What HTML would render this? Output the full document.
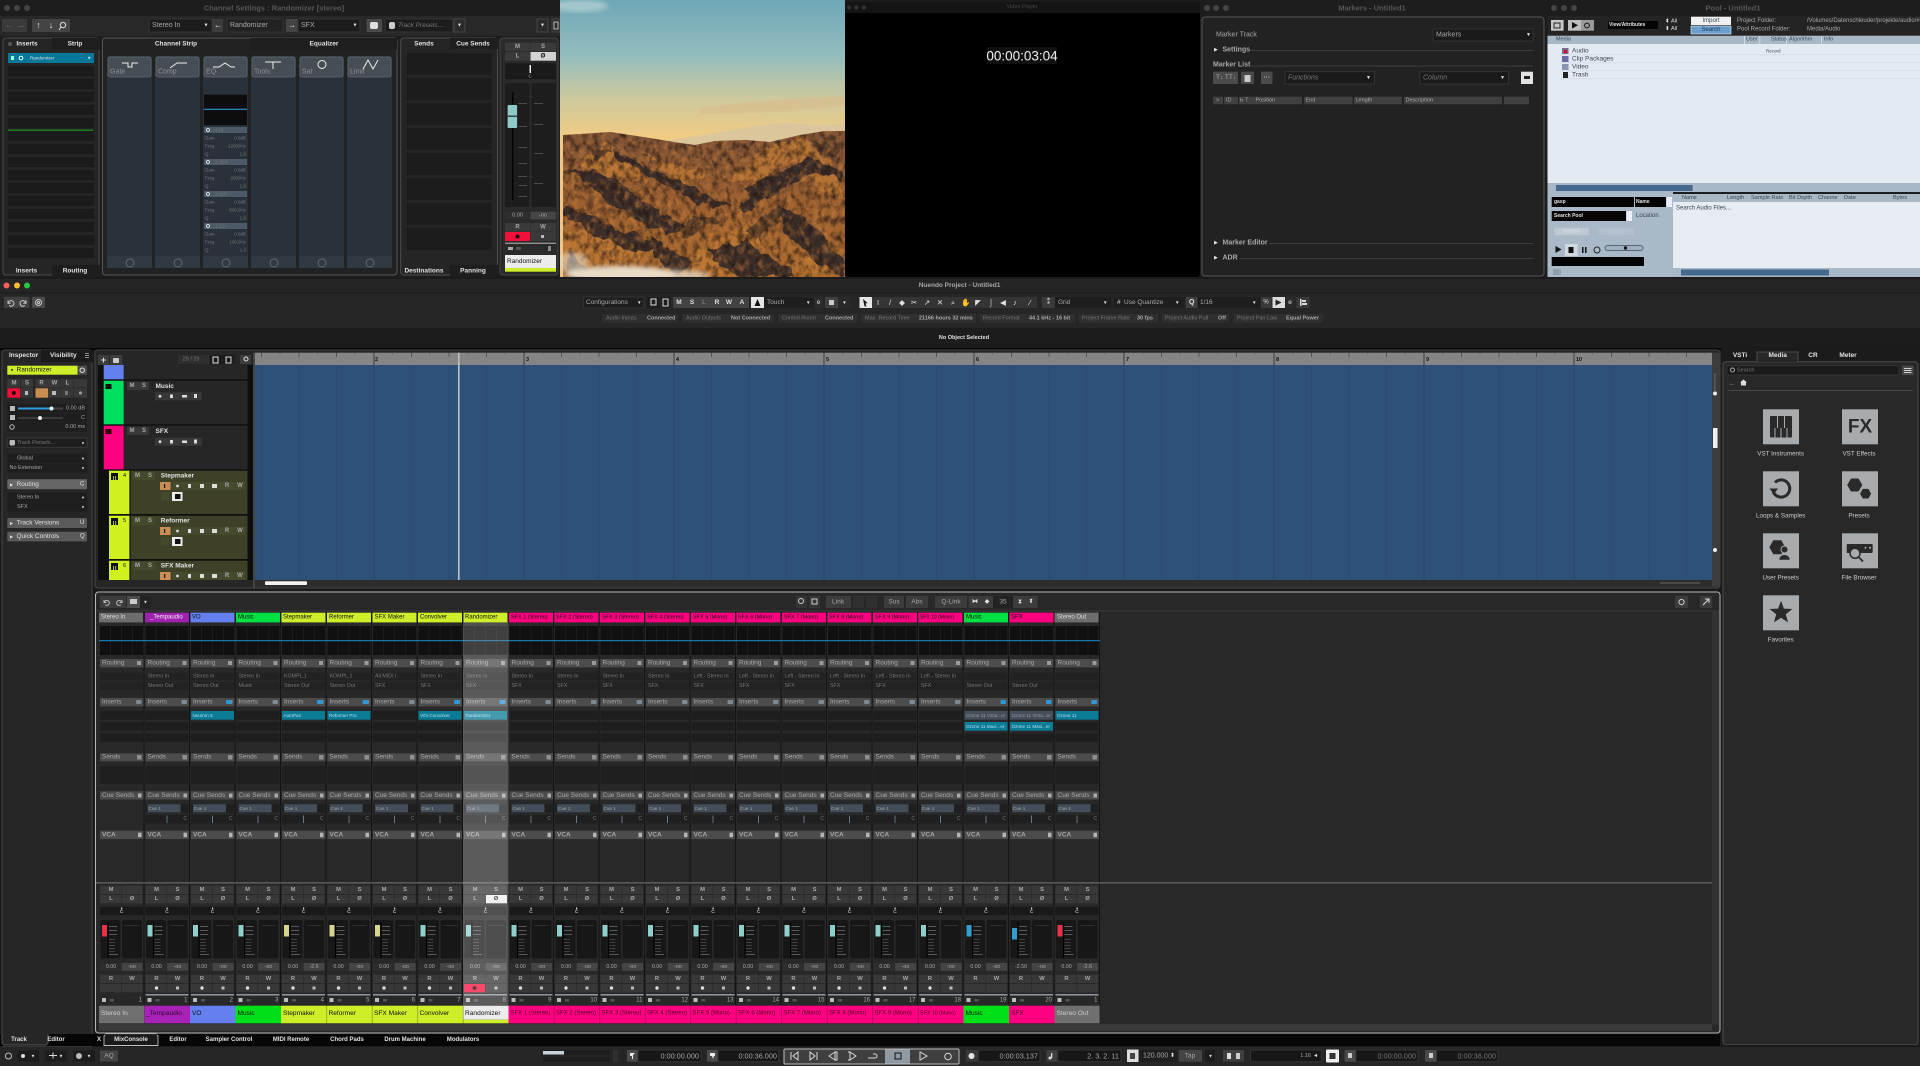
<!DOCTYPE html>
<html lang="en"><head><meta charset="utf-8"><title>Nuendo Project - Untitled1</title>
<style>
html,body{margin:0;padding:0;width:1920px;height:1066px;overflow:hidden;background:#1b1b1b}
svg{display:block;font-family:"Liberation Sans",sans-serif;font-size:6.5px;filter:blur(.3px)}
text{dominant-baseline:central;fill:#a8a8a8;white-space:pre}
.m text,text.m{text-anchor:middle}
.e text,text.e{text-anchor:end}
.w text,text.w{fill:#e2e2e2}
.d text,text.d{fill:#111}
.g text,text.g{fill:#777}
.l text,text.l{fill:#3a4652}
.b text,text.b{font-weight:bold}
text.t{fill:#565656;font-weight:bold;text-anchor:middle;font-size:7.5px}
</style></head><body>
<svg width="1920" height="1066" viewBox="0 0 1920 1066" xmlns="http://www.w3.org/2000/svg">
<defs>
<linearGradient id="sky" x1="0" y1="0" x2="0" y2="1"><stop offset="0" stop-color="#6ea7b8"/><stop offset=".2" stop-color="#93bdbd"/><stop offset=".36" stop-color="#cfc99d"/><stop offset=".5" stop-color="#f1cc83"/><stop offset=".62" stop-color="#f0c585"/></linearGradient>
<linearGradient id="mt" x1="0" y1="0" x2="0" y2="1"><stop offset="0" stop-color="#7d5236"/><stop offset=".5" stop-color="#9c6030"/><stop offset="1" stop-color="#ad6c2e"/></linearGradient>
<filter id="nz" x="0" y="0" width="1" height="1" color-interpolation-filters="sRGB"><feTurbulence type="fractalNoise" baseFrequency=".16 .12" numOctaves="4" seed="4"/><feColorMatrix values="0 0 0 0 .12 0 0 0 0 .08 0 0 0 0 .07 1.7 0 0 0 -.72"/><feComposite in2="SourceGraphic" operator="in"/></filter>
<filter id="nl" x="0" y="0" width="1" height="1" color-interpolation-filters="sRGB"><feTurbulence type="fractalNoise" baseFrequency=".14 .11" numOctaves="4" seed="11"/><feColorMatrix values="0 0 0 0 .8 0 0 0 0 .5 0 0 0 0 .24 1.5 0 0 0 -.68"/><feComposite in2="SourceGraphic" operator="in"/></filter>
<filter id="dp" x="-5%" y="-5%" width="110%" height="110%" color-interpolation-filters="sRGB"><feTurbulence type="fractalNoise" baseFrequency=".07" numOctaves="3" seed="7" result="n"/><feDisplacementMap in="SourceGraphic" in2="n" scale="12" xChannelSelector="R" yChannelSelector="G"/></filter>
<filter id="bl"><feGaussianBlur stdDeviation="2.5"/></filter>
<filter id="bs"><feGaussianBlur stdDeviation=".8"/></filter>
<clipPath id="wp"><rect x="560" y="0" width="285" height="277"/></clipPath>
<clipPath id="mc"><path d="M563 135l17-1 30-2 20 3 20 3 30 5 15 2 20-4 30-1 25 2 30-7 25-4 20 0v146H563z"/></clipPath>
<pattern id="rul" patternUnits="userSpaceOnUse" x="373.5" y="352" width="150" height="13"><rect width="150" height="13" fill="#858585"/><rect x="0" width="1" height="13" fill="#3d3d3d"/><rect x="37.5" width="1" height="5" fill="#555"/><rect x="75" width="1" height="5" fill="#555"/><rect x="112.5" width="1" height="5" fill="#555"/><rect x="18.7" width="1" height="3" fill="#6a6a6a"/><rect x="56" width="1" height="3" fill="#6a6a6a"/><rect x="93.7" width="1" height="3" fill="#6a6a6a"/><rect x="131" width="1" height="3" fill="#6a6a6a"/></pattern>
<pattern id="evt" patternUnits="userSpaceOnUse" x="373.5" y="365" width="150" height="215"><rect width="150" height="215" fill="#2e5079"/><rect x="0" width="1" height="215" fill="#284668"/><rect x="37.5" width="1" height="215" fill="#2b4b72"/><rect x="75" width="1" height="215" fill="#2b4b72"/><rect x="112.5" width="1" height="215" fill="#2b4b72"/></pattern>
<g id="s">
<rect x="44.5" y="612" width="1" height="393" fill="#141414"/>
<rect x="1" y="626" width="43" height="29" fill="#101010"/>
<rect x="11" y="626" width="1" height="29" fill="#1c1c1c"/><rect x="22" y="626" width="1" height="29" fill="#1c1c1c"/><rect x="33" y="626" width="1" height="29" fill="#1c1c1c"/>
<rect x="1" y="659" width="43.5" height="8.4" fill="#4c4c4c"/><rect x="38" y="661" width="4" height="4" fill="#9a9a9a"/>
<rect x="1" y="672.7" width="43" height="7.6" fill="#222"/><rect x="1" y="682.3" width="43" height="7.7" fill="#222"/>
<rect x="1" y="698" width="43.5" height="8.4" fill="#4c4c4c"/><rect x="37" y="700" width="5.5" height="4" rx="1" fill="#7c8a96"/>
<rect x="1" y="711" width="43" height="8.7" fill="#1e1e1e"/><rect x="1" y="722" width="43" height="8.7" fill="#1e1e1e"/><rect x="1" y="733.3" width="43" height="8.7" fill="#1e1e1e"/>
<rect x="1" y="753.3" width="43.5" height="8" fill="#4c4c4c"/><rect x="38" y="755" width="4.5" height="4.5" fill="#8f8f8f"/>
<rect x="1" y="766" width="43" height="18" fill="#1f1f1f"/>
<rect x="1" y="791.3" width="43.5" height="8.2" fill="#4c4c4c"/><rect x="39" y="793.5" width="3.5" height="4" fill="#ababab"/>
<rect x="1" y="804.3" width="43" height="8" fill="#1f1f1f"/><rect x="3" y="804.3" width="33" height="8" fill="#434e5a"/>
<rect x="1" y="815" width="43" height="8.3" fill="#1f1f1f"/><rect x="22" y="815.5" width="1" height="7.5" fill="#6a7682"/>
<rect x="1" y="830.7" width="43.5" height="8.4" fill="#4c4c4c"/><rect x="39" y="832.7" width="3.5" height="4.5" fill="#b5b5b5"/>
<rect x="1" y="885.7" width="21" height="8.3" fill="#383838"/><rect x="22.6" y="885.7" width="21" height="8.3" fill="#383838"/>
<rect x="1" y="895" width="21" height="8.3" fill="#383838"/><rect x="22.6" y="895" width="21" height="8.3" fill="#383838"/>
<rect x="1" y="906.7" width="43" height="8.6" rx="2" fill="#191919"/><rect x="22" y="907.5" width="1.2" height="2" fill="#ddd"/>
<rect x="1.5" y="920" width="20" height="38.5" rx="2" fill="#171717"/><rect x="23" y="920" width="20" height="38.5" rx="2" fill="#171717"/>
<rect x="8.5" y="922" width="1" height="36" fill="#000"/>
<rect x="10" y="926" width="8" height=".7" fill="#777"/><rect x="10" y="930" width="8" height=".7" fill="#777"/><rect x="10" y="934" width="8" height=".7" fill="#777"/><rect x="10" y="939" width="6" height=".7" fill="#555"/><rect x="10" y="942" width="6" height=".7" fill="#555"/><rect x="10" y="945" width="6" height=".7" fill="#555"/><rect x="10" y="948" width="6" height=".7" fill="#555"/><rect x="10" y="951" width="6" height=".7" fill="#555"/><rect x="10" y="954" width="9" height=".7" fill="#777"/>
<rect x="26" y="925" width="14" height=".7" fill="#3a3a3a"/>
<rect x="1" y="963" width="21" height="7.7" fill="#2d2d2d"/><rect x="22.6" y="963" width="21" height="7.7" fill="#454545"/>
<rect x="1" y="974.7" width="21" height="8.3" fill="#383838"/><rect x="22.6" y="974.7" width="21" height="8.3" fill="#383838"/>
<rect x="1" y="984" width="21" height="8.3" fill="#383838"/><rect x="22.6" y="984" width="21" height="8.3" fill="#383838"/>
<rect x="1" y="994" width="43" height="1.6" fill="#8a939b"/>
<rect x="3" y="998" width="4" height="4" fill="#bbb"/><rect x="11" y="999" width="4" height="2.5" fill="#555"/>
</g>
</defs>

<!-- Channel settings window -->
<rect x="0" y="0" width="563" height="277" rx="4" fill="#1e1e1e"/>
<rect x="0" y="0" width="563" height="16" fill="#1d1d1d"/>
<circle cx="7" cy="8" r="3" fill="#444"/><circle cx="17" cy="8" r="3" fill="#444"/><circle cx="27" cy="8" r="3" fill="#444"/>
<text class="t" x="274" y="8">Channel Settings : Randomizer [stereo]</text>
<rect x="0" y="16" width="563" height="20" fill="#282828"/>
<rect x="2" y="19" width="25" height="13" fill="#3a3a3a"/><rect x="32" y="19" width="38" height="13" fill="#444"/>
<g class="w m" font-size="9"><text x="38.5" y="25">↑</text><text x="51" y="25">↓</text></g><text class="g m" x="9" y="25" font-size="8">←</text><text class="g m" x="21" y="25" font-size="8">→</text>
<circle cx="63" cy="25" r="2.7" fill="none" stroke="#ddd"/><path d="M61 27l-2 3" stroke="#ddd"/>
<rect x="149" y="19" width="63" height="13" fill="#1c1c1c" stroke="#333"/><text x="152" y="25.5" font-size="7">Stereo In</text><text class="w m" x="206" y="25.5" font-size="5">▼</text>
<rect x="212" y="19" width="11" height="13" fill="#3c3c3c"/><text class="w m" x="218" y="25" font-size="8">←</text>
<rect x="227" y="19" width="56" height="13" fill="#222" stroke="#333"/><text x="230" y="25.5" font-size="7">Randomizer</text>
<rect x="286" y="19" width="12" height="13" fill="#444"/><text class="w m" x="292" y="25" font-size="8">→</text>
<rect x="298" y="19" width="62" height="13" fill="#1c1c1c" stroke="#333"/><text x="301" y="25.5" font-size="7">SFX</text><text class="w m" x="355" y="25.5" font-size="5">▼</text>
<rect x="366.5" y="19" width="15.5" height="13" fill="#4a4a4a"/><rect x="370" y="22" width="8" height="7" rx="2" fill="#ddd"/>
<rect x="385" y="19" width="68" height="13" fill="#1c1c1c" stroke="#333"/><rect x="389" y="22" width="6" height="7" rx="2" fill="#ccc"/><text class="g" x="398" y="25.5" font-size="6.5" font-style="italic">Track Presets...</text>
<rect x="454" y="19" width="11" height="13" fill="#2b2b2b" stroke="#444"/><text class="w m" x="459.5" y="25.5" font-size="5">▼</text>
<rect x="537" y="19" width="11" height="13" fill="#2b2b2b" stroke="#444"/><text class="w m" x="542.5" y="25.5" font-size="5">▼</text><rect x="552" y="19" width="8" height="13" fill="#2b2b2b" stroke="#444"/><rect x="554" y="22" width="4" height="7" fill="none" stroke="#bbb"/>
<rect x="3" y="38" width="96" height="237" rx="3" fill="#252525" stroke="#4a4a4a"/>
<rect x="52" y="38" width="48" height="12" fill="#1e1e1e"/><rect x="52" y="265" width="48" height="11" fill="#1e1e1e"/>
<circle cx="10" cy="44" r="2" fill="#555"/><g class="w b m" font-size="6.5"><text x="27" y="44">Inserts</text><text x="75" y="44">Strip</text><text x="26.5" y="271">Inserts</text><text x="75" y="271">Routing</text></g>
<rect x="8" y="53" width="86" height="10" fill="#08789a"/><text class="w" x="30" y="58" font-size="4.5">Randomizer</text><rect x="11" y="56" width="3" height="4" fill="#9fd"/><circle cx="21" cy="58" r="1.8" fill="none" stroke="#dff"/><text class="w" x="87" y="58" font-size="4.5">▼</text>
<g fill="#1b1b1b"><rect x="8" y="66" width="86" height="10"/><rect x="8" y="79" width="86" height="10"/><rect x="8" y="92" width="86" height="10"/><rect x="8" y="105" width="86" height="10"/><rect x="8" y="118" width="86" height="10"/><rect x="8" y="131" width="86" height="10"/><rect x="8" y="144" width="86" height="10"/><rect x="8" y="157" width="86" height="10"/><rect x="8" y="170" width="86" height="10"/><rect x="8" y="183" width="86" height="10"/><rect x="8" y="196" width="86" height="10"/><rect x="8" y="209" width="86" height="10"/><rect x="8" y="222" width="86" height="10"/><rect x="8" y="235" width="86" height="10"/><rect x="8" y="248" width="86" height="10"/></g>
<rect x="8" y="129.5" width="85" height="1.5" fill="#1a7d1e"/>
<rect x="102.5" y="38" width="294.5" height="237" rx="3" fill="#222" stroke="#555"/>
<rect x="251" y="38" width="146" height="12" fill="#1e1e1e"/>
<g class="w b m" font-size="6.5"><text x="176" y="44">Channel Strip</text><text x="324" y="44">Equalizer</text></g>
<g fill="#29323a"><rect x="107" y="56" width="45" height="212" rx="2"/><rect x="155" y="56" width="45" height="212" rx="2"/><rect x="203" y="56" width="45" height="212" rx="2"/><rect x="251" y="56" width="45" height="212" rx="2"/><rect x="299" y="56" width="45" height="212" rx="2"/><rect x="347" y="56" width="45" height="212" rx="2"/></g>
<g fill="#464e55" stroke="#646c72" stroke-width=".7"><rect x="108" y="57" width="43" height="20" rx="2"/><rect x="156" y="57" width="43" height="20" rx="2"/><rect x="204" y="57" width="43" height="20" rx="2"/><rect x="252" y="57" width="43" height="20" rx="2"/><rect x="300" y="57" width="43" height="20" rx="2"/><rect x="348" y="57" width="43" height="20" rx="2"/></g>
<g fill="none" stroke="#eee" stroke-width="1"><path d="M122 67h6v5h0M122 62.5h6v5h4v-5h6" stroke="none"/><path d="M122 67h6v5" stroke="none"/><path d="M122 63h6v4h4v-4h6"/><path d="M170 68l7-5h10"/><path d="M213 67h6l6-4 6 4h4"/><path d="M265 62h16M273 62v7"/><circle cx="322" cy="64.5" r="4"/><path d="M363 69l5-9 5 9 5-9"/></g>
<g font-size="7"><text x="110" y="72" style="fill:#8a9095">Gate</text><text x="158" y="72" style="fill:#8a9095">Comp</text><text x="206" y="72" style="fill:#8a9095">EQ</text><text x="254" y="72" style="fill:#8a9095">Tools</text><text x="302" y="72" style="fill:#8a9095">Sat</text><text x="350" y="72" style="fill:#8a9095">Limit</text></g>
<g fill="#2f3941"><rect x="107" y="256" width="45" height="12"/><rect x="155" y="256" width="45" height="12"/><rect x="203" y="256" width="45" height="12"/><rect x="251" y="256" width="45" height="12"/><rect x="299" y="256" width="45" height="12"/><rect x="347" y="256" width="45" height="12"/></g>
<g fill="none" stroke="#5f6b74"><circle cx="130" cy="263" r="4"/><circle cx="178" cy="263" r="4"/><circle cx="226" cy="263" r="4"/><circle cx="274" cy="263" r="4"/><circle cx="322" cy="263" r="4"/><circle cx="370" cy="263" r="4"/></g>
<rect x="204" y="94.7" width="43" height="30.5" fill="#0d0d0d"/><rect x="204" y="108.7" width="43" height="1.2" fill="#2a8fc0"/>
<g fill="#4b5a66"><rect x="204" y="127" width="43" height="6"/><rect x="204" y="159" width="43" height="6"/><rect x="204" y="191" width="43" height="6"/><rect x="204" y="223" width="43" height="6"/></g>
<g fill="none" stroke="#ddd"><circle cx="208" cy="130" r="1.6"/><circle cx="208" cy="162" r="1.6"/><circle cx="208" cy="194" r="1.6"/><circle cx="208" cy="226" r="1.6"/></g>
<g font-size="4.5" class="g"><text x="215" y="130">4 HI</text><text x="215" y="162">3 HMF</text><text x="215" y="194">2 LMF</text><text x="215" y="226">1 LO</text>
<text x="205" y="138">Gain</text><text x="205" y="146">Freq</text><text x="205" y="154">Q</text><text x="205" y="170">Gain</text><text x="205" y="178">Freq</text><text x="205" y="186">Q</text><text x="205" y="202">Gain</text><text x="205" y="210">Freq</text><text x="205" y="218">Q</text><text x="205" y="234">Gain</text><text x="205" y="242">Freq</text><text x="205" y="250">Q</text></g>
<g font-size="4.5" class="g e"><text x="246" y="138">0.0dB</text><text x="246" y="146">12000Hz</text><text x="246" y="154">1.0</text><text x="246" y="170">0.0dB</text><text x="246" y="178">2000Hz</text><text x="246" y="186">1.0</text><text x="246" y="202">0.0dB</text><text x="246" y="210">800.0Hz</text><text x="246" y="218">1.0</text><text x="246" y="234">0.0dB</text><text x="246" y="242">100.0Hz</text><text x="246" y="250">1.0</text></g>
<rect x="400.7" y="38" width="96.8" height="237" rx="3" fill="#252525" stroke="#4f4f4f"/><rect x="450" y="38" width="48" height="11" fill="#1e1e1e"/><rect x="450" y="265" width="48" height="11" fill="#1e1e1e"/>
<g fill="#1c1c1c"><rect x="406.5" y="53" width="85" height="22"/><rect x="406.5" y="78" width="85" height="22"/><rect x="406.5" y="103" width="85" height="22"/><rect x="406.5" y="128" width="85" height="22"/><rect x="406.5" y="153" width="85" height="22"/><rect x="406.5" y="178" width="85" height="22"/><rect x="406.5" y="203" width="85" height="22"/><rect x="406.5" y="228" width="85" height="22"/></g>
<g class="w b m" font-size="6.5"><text x="424" y="44">Sends</text><text x="473" y="44">Cue Sends</text><text x="424" y="271">Destinations</text><text x="473" y="271">Panning</text></g>
<rect x="500" y="38" width="58" height="237" rx="3" fill="#2a2a2a" stroke="#444"/>
<rect x="505" y="42.7" width="25" height="8.5" fill="#3a3a3a"/><rect x="530.5" y="42.7" width="25.5" height="8.5" fill="#3a3a3a"/><rect x="505" y="52" width="25" height="8.7" fill="#3a3a3a"/><rect x="530.5" y="52" width="25.5" height="8.7" fill="#d2d2d2"/>
<g class="m b" font-size="6"><text x="517.5" y="47">M</text><text x="543" y="47">S</text><text x="517.5" y="56.5">L</text><text class="d" x="543" y="56.5">Ø</text></g>
<rect x="505" y="63.3" width="51" height="16" rx="2" fill="#1a1a1a"/><rect x="529.5" y="65" width="1.5" height="8" fill="#eee"/><text class="m" x="530" y="76" font-size="4.5">C</text>
<rect x="505" y="83" width="24.5" height="124" rx="2" fill="#1d1d1d"/><rect x="531.5" y="83" width="24.5" height="124" rx="2" fill="#1d1d1d"/><rect x="512" y="92" width="1.5" height="108" fill="#050505"/>
<g fill="#555"><rect x="518" y="103" width="9" height=".8"/><rect x="518" y="126" width="9" height=".8"/><rect x="518" y="147" width="9" height=".8"/><rect x="518" y="163" width="9" height=".8"/><rect x="518" y="176" width="9" height=".8"/><rect x="518" y="185" width="9" height=".8"/><rect x="518" y="196" width="9" height=".8"/><rect x="534" y="103" width="9" height=".8"/><rect x="534" y="124" width="9" height=".8"/><rect x="534" y="153" width="9" height=".8"/><rect x="534" y="183" width="9" height=".8"/></g>
<rect x="507.6" y="105" width="9.5" height="23" rx="1" fill="#8fcac8"/><rect x="507.6" y="115.5" width="9.5" height="1.5" fill="#33494a"/>
<rect x="505" y="211.7" width="24.5" height="7.7" fill="#2e2e2e"/><rect x="530.5" y="211.7" width="25.5" height="7.7" fill="#454545"/><text class="m" x="517.5" y="215.5" font-size="5.5">0.00</text><text class="m" x="543" y="215.5" font-size="5.5">-oo</text>
<rect x="505" y="223" width="25" height="8.7" fill="#3a3a3a"/><rect x="530.5" y="223" width="25.5" height="8.7" fill="#3a3a3a"/><rect x="505" y="232" width="25" height="9" fill="#f0103a"/><rect x="530.5" y="232" width="25.5" height="9" fill="#3a3a3a"/><circle cx="517.5" cy="236.5" r="2" fill="#180004"/><rect x="541" y="235" width="3" height="3" fill="#bbb"/>
<g class="m b" font-size="6"><text x="517.5" y="227.5">R</text><text x="543" y="227.5">W</text></g>
<rect x="505" y="242.7" width="51" height="1" fill="#bbb"/><rect x="508" y="247" width="5" height="3" fill="#aaa"/><rect x="516" y="247" width="5" height="3" fill="#555"/><rect x="548" y="246" width="3" height="5" fill="#888"/>
<rect x="505" y="255" width="51" height="13" fill="#ececec"/><rect x="505" y="268" width="51" height="3.7" fill="#cdee28"/><text class="d" x="507" y="261.5" font-size="6.5">Randomizer</text>

<!-- Wallpaper -->
<g clip-path="url(#wp)">
<rect x="560" y="0" width="290" height="277" fill="url(#sky)"/>
<ellipse cx="580" cy="6" rx="28" ry="6" fill="#cfe0da" opacity=".55" filter="url(#bl)"/>
<path d="M700 108l40-5 35-3 70-4v10l-70 6-75 2z" fill="#d9b98a" opacity=".55" filter="url(#bs)"/>
<path d="M660 142l60-10 35-6 30-3 30 2 35-1v30H660z" fill="#d8c4a0" opacity=".85"/>
<path d="M563 135l17-1 30-2 20 3 20 3 30 5 15 2 20-4 30-1 25 2 30-7 25-4 20 0v146H563z" fill="url(#mt)"/>
<g clip-path="url(#mc)"><g filter="url(#dp)">
<g fill="#bd7934" opacity=".8"><path d="M575 165l30-22 25 25 20 15-40-6z"/><path d="M640 150l30 15 40 8-25 15z"/><path d="M725 180l40-32 40-12 20 30-30-6-35 20z"/><path d="M563 232l40 0 40 20-30 18-50-10z"/><path d="M700 250l50-28 20 5-35 50h-50z"/><path d="M790 150l40 10 15 40-25-10z"/><path d="M800 235l20 10 15 30h-25z"/></g>
<g fill="#2f2729" opacity=".88"><path d="M610 147l34 20 34 13 38 20 16 7-20 1-38-18-34-16-30-22z"/><path d="M568 170l34 3 34 24 50 30-21 6-50-26-30-24z"/><path d="M564 207l21 6 34 17 46 17-21 6-46-16-34-20z"/><path d="M779 207l25 10 40 43v17l-32-20-29-27z"/><path d="M737 207l33-30 42-20 32 16v9l-27-12-38 20-34 23z"/><path d="M707 253l38-13 34 23 17 14h-55z"/><path d="M640 160l22 16-14 2z"/><path d="M570 250l25 27h-30z"/><path d="M650 235l40 25-12 17-24-20z"/><path d="M745 190l22-14 6 6-20 18z"/></g>
<g fill="#473526" opacity=".75"><path d="M745 230l20-15 20-5-25 30z"/><path d="M690 215l30 5-40 20z"/><path d="M590 145l20 8-16 10z"/><path d="M810 140l30 5v14l-22-5z"/></g>
</g></g>
<path d="M563 135l17-1 30-2 20 3 20 3 30 5 15 2 20-4 30-1 25 2 30-7 25-4 20 0v146H563z" filter="url(#nl)"/>
<path d="M563 135l17-1 30-2 20 3 20 3 30 5 15 2 20-4 30-1 25 2 30-7 25-4 20 0v146H563z" filter="url(#nz)"/>
<g filter="url(#bl)" fill="#e8dcc8"><ellipse cx="620" cy="274" rx="55" ry="8"/><ellipse cx="670" cy="275" rx="40" ry="5" opacity=".8"/><ellipse cx="572" cy="262" rx="16" ry="10" opacity=".6"/></g>
</g>

<!-- Video player -->
<rect x="845" y="2" width="355" height="275" rx="3" fill="#000"/><rect x="845" y="2" width="355" height="11" fill="#141414"/>
<circle cx="849" cy="7.5" r="2" fill="#333"/><circle cx="856.5" cy="7.5" r="2" fill="#333"/><circle cx="864" cy="7.5" r="2" fill="#333"/>
<text class="m" x="1022" y="7" font-size="5.5" style="fill:#444">Video Player</text>
<rect x="987" y="47" width="70" height="17" fill="#111"/><text class="m w" x="1022" y="56" font-size="13.5" style="fill:#f2f2f2">00:00:03:04</text>

<!-- Markers -->
<rect x="1200" y="0" width="347" height="277" fill="#1d1d1d"/><circle cx="1207" cy="8" r="3" fill="#444"/><circle cx="1216" cy="8" r="3" fill="#444"/><circle cx="1226" cy="8" r="3" fill="#444"/>
<text class="t" x="1372" y="8">Markers - Untitled1</text>
<rect x="1202" y="17" width="342" height="259" rx="3" fill="#222" stroke="#555"/>
<text x="1216" y="35" font-size="7">Marker Track</text>
<rect x="1433" y="29" width="100" height="12" fill="#1a1a1a" stroke="#333"/><text x="1436" y="35" font-size="7">Markers</text><text class="w" x="1526" y="35" font-size="5">▼</text>
<g class="w" font-size="5"><text x="1214" y="50">▶</text><text x="1214" y="243">▶</text><text x="1214" y="258">▶</text></g>
<g font-size="7" class="b"><text x="1222.5" y="50">Settings</text><text x="1213" y="65">Marker List</text><text x="1222.5" y="243">Marker Editor</text><text x="1222.5" y="258">ADR</text></g>
<g fill="#3d3d3d"><rect x="1250" y="50" width="283" height="1"/><rect x="1250" y="65.5" width="283" height="1"/><rect x="1269" y="243" width="264" height="1"/><rect x="1240" y="258" width="293" height="1"/></g>
<rect x="1213" y="71.7" width="25" height="12.3" fill="#4a4a4a"/><rect x="1241" y="71.7" width="13" height="12.3" fill="#4a4a4a"/><rect x="1244.5" y="75" width="6" height="7" fill="#ccc"/><rect x="1261" y="71.7" width="11.5" height="12.3" fill="#4a4a4a"/><text class="w m" x="1266.7" y="77.5">⋯</text><text x="1216" y="77.5">T↓ TT↓</text>
<rect x="1285" y="71.7" width="89.5" height="12.3" fill="#1a1a1a" stroke="#333"/><text class="g" x="1288" y="78" font-size="7" font-style="italic">Functions</text><text class="w" x="1366" y="78" font-size="5">▼</text>
<rect x="1420" y="71.7" width="88.5" height="12.3" fill="#1a1a1a" stroke="#333"/><text class="g" x="1423" y="78" font-size="7" font-style="italic">Column</text><text class="w" x="1500" y="78" font-size="5">▼</text>
<rect x="1521" y="71.7" width="12" height="12.3" fill="#e2e2e2"/><rect x="1524" y="76" width="6" height="3" fill="#222"/>
<g fill="#404040"><rect x="1213" y="96.7" width="10" height="7.6"/><rect x="1224" y="96.7" width="14" height="7.6"/><rect x="1239" y="96.7" width="15" height="7.6"/><rect x="1254" y="96.7" width="48" height="7.6"/><rect x="1304" y="96.7" width="48.5" height="7.6"/><rect x="1354" y="96.7" width="48" height="7.6"/><rect x="1404" y="96.7" width="98" height="7.6"/><rect x="1504" y="96.7" width="25" height="7.6"/></g>
<g font-size="5.5"><text x="1216" y="100.7">&gt;</text><text x="1226" y="100.7">ID</text><text x="1240" y="100.7">Ь T</text><text x="1255.5" y="100.7">Position</text><text x="1305.5" y="100.7">End</text><text x="1355.5" y="100.7">Length</text><text x="1405.5" y="100.7">Description</text></g>

<!-- Pool -->
<rect x="1547" y="0" width="373" height="277" fill="#1d1d1d"/><circle cx="1554" cy="8" r="3" fill="#444"/><circle cx="1564" cy="8" r="3" fill="#444"/><circle cx="1574" cy="8" r="3" fill="#444"/>
<text class="t" x="1733" y="8">Pool - Untitled1</text>
<rect x="1547.5" y="16" width="372.5" height="20" fill="#242424"/>
<rect x="1551" y="20" width="12.6" height="10.7" fill="#c8c8c8"/><rect x="1554" y="23" width="6" height="5" fill="none" stroke="#222"/>
<rect x="1568" y="20" width="13" height="10.7" fill="#bfbfbf"/><path d="M1572 22l6 3.3-6 3.3z" fill="#111"/><rect x="1581" y="20" width="13" height="10.7" fill="#9a9a9a"/><circle cx="1587" cy="25.5" r="2.4" fill="none" stroke="#111"/>
<rect x="1608" y="21" width="50" height="8" fill="#050505"/><text class="w b" x="1609" y="25" font-size="5">View/Attributes</text>
<g class="w" font-size="5.5"><text x="1665" y="21.5">⬍</text><text x="1671" y="21.5">All</text><text x="1665" y="29">⬍</text><text x="1671" y="29">All</text></g>
<rect x="1691" y="16.7" width="40" height="8.3" fill="#f0f0f0"/><text class="m l" x="1711" y="21" font-size="6">Import</text>
<rect x="1691" y="26" width="40" height="8" fill="#6a9fd0" stroke="#d8e4ee" stroke-width=".7"/><text class="m l" x="1711" y="30" font-size="6" style="fill:#1b3550">Search</text>
<g font-size="6"><text x="1737" y="21">Project Folder:</text><text x="1737" y="29.5">Pool Record Folder:</text><text x="1807" y="21">/Volumes/Datenschleuder/projekte/audio/#r</text><text x="1807" y="29.5">Media/Audio</text></g>
<rect x="1547.5" y="35.7" width="372.5" height="8.3" fill="#a9b8c6"/>
<g fill="#dfe6ed"><rect x="1744" y="36" width=".7" height="8"/><rect x="1759.5" y="36" width=".7" height="8"/><rect x="1786" y="36" width=".7" height="8"/><rect x="1821" y="36" width=".7" height="8"/></g>
<g class="l" font-size="5.5"><text x="1556" y="39.7">Media</text><text x="1746" y="39.7">User</text><text x="1771" y="39.7">Status</text><text x="1789" y="39.7">Algorithm</text><text x="1824" y="39.7">Info</text></g>
<rect x="1547.5" y="44" width="372.5" height="139" fill="#e4eaf1"/>
<g fill="#ced6de"><rect x="1560" y="54.5" width="360" height=".7"/><rect x="1560" y="62.5" width="360" height=".7"/><rect x="1560" y="70.5" width="360" height=".7"/><rect x="1560" y="78.5" width="360" height=".7"/></g>
<rect x="1562" y="48" width="6.5" height="6" fill="#7a6a90"/><rect x="1564" y="50" width="3" height="3" fill="#d01020"/><rect x="1562" y="56" width="6.5" height="6" fill="#6a6aa8"/><rect x="1562" y="64" width="6.5" height="6" fill="#8a94b4"/><rect x="1563" y="72" width="5" height="6" fill="#222"/>
<g class="l" font-size="6.5"><text x="1572" y="51">Audio</text><text x="1572" y="59">Clip Packages</text><text x="1572" y="67">Video</text><text x="1572" y="75">Trash</text><text x="1766" y="51" font-size="4.5">Record</text></g>
<rect x="1547.5" y="183" width="372.5" height="9" fill="#a8b8c8"/><rect x="1556" y="185" width="136.6" height="6" fill="#45698e"/>
<rect x="1547.5" y="192" width="125.5" height="85" fill="#a9b9c8"/>
<rect x="1551.7" y="197" width="82.3" height="10" fill="#050505"/><text class="w b" x="1554" y="202" font-size="5">gasp</text><rect x="1635" y="197" width="31" height="10" fill="#050505"/><text class="w b" x="1636" y="202" font-size="5">Name</text><rect x="1666.5" y="197" width="5.5" height="10" fill="#eef"/>
<rect x="1551.7" y="211" width="74.3" height="10" fill="#050505"/><text class="w b" x="1554" y="216" font-size="5">Search Pool</text><rect x="1626.5" y="211" width="5.5" height="10" fill="#eef"/><text class="l" x="1636" y="216" font-size="6">Location</text>
<rect x="1554" y="227.7" width="35" height="7.5" rx="2" fill="#bdc8d3"/><rect x="1599" y="227.7" width="35" height="7.5" rx="2" fill="#b2c0cd"/><text class="m" x="1571.5" y="231.5" font-size="5.5" style="fill:#dfe6ee">Search</text><text class="m" x="1616" y="231.5" font-size="5.5" style="fill:#bfcad6">Select</text>
<path d="M1555.5 246l6 3.5-6 3.5z" fill="#111"/><rect x="1565" y="244" width="12.5" height="12" fill="#cfd7df"/><rect x="1568.5" y="247" width="5" height="6" fill="#111"/><rect x="1582" y="247" width="1.5" height="6" fill="#111"/><rect x="1585" y="247" width="1.5" height="6" fill="#111"/><circle cx="1597" cy="250" r="3" fill="none" stroke="#222"/>
<rect x="1605" y="245.5" width="38" height="5" rx="2.5" fill="#9fb0c0" stroke="#3f4f5f" stroke-width=".7"/><circle cx="1625.5" cy="248" r="1.7" fill="#111"/>
<rect x="1551.7" y="257" width="92.3" height="9" fill="#050505"/><rect x="1553" y="269" width="8" height="6" fill="#8f9fad"/>
<rect x="1673" y="194" width="247" height="8" fill="#a9b8c6"/>
<g class="l" font-size="5.6"><text x="1682" y="198">Name</text><text x="1727" y="198">Length</text><text x="1751" y="198">Sample Rate</text><text x="1789" y="198">Bit Depth</text><text x="1818" y="198">Channe</text><text x="1844" y="198">Date</text><text x="1893" y="198">Bytes</text></g>
<rect x="1673" y="202" width="247" height="66" fill="#e6ecf2"/><text class="l" x="1676" y="208.7" font-size="6">Search Audio Files...</text>
<rect x="1673" y="268" width="247" height="9" fill="#a8b8c8"/><rect x="1681" y="269.5" width="148" height="6" fill="#45698e"/>

<!-- Main window -->
<rect x="0" y="279" width="1920" height="70" fill="#262626"/>
<rect x="0" y="279" width="1920" height="13.5" fill="#252525"/><rect x="0" y="292.5" width="1920" height="1" fill="#1c1c1c"/>
<circle cx="6.5" cy="285.5" r="3" fill="#f4605a"/><circle cx="17" cy="285.5" r="3" fill="#f9bd2e"/><circle cx="27" cy="285.5" r="3" fill="#28c840"/>
<text class="m b" x="959.5" y="285.7" font-size="6.5">Nuendo Project - Untitled1</text>
<rect x="4" y="296.7" width="25.4" height="11.3" rx="1" fill="#404040"/><rect x="32" y="296.7" width="13" height="11.3" rx="1" fill="#4a4a4a"/><g fill="none" stroke="#ccc"><path d="M8 300.5v2.8h2.8M8.4 303a2.8 2.8 0 1 1 .8 2.4"/><path d="M26 300.5v2.8h-2.8M25.6 303a2.8 2.8 0 1 0-.8 2.4"/><circle cx="38.5" cy="302.5" r="3"/><circle cx="38.5" cy="302.5" r="1"/></g>
<rect x="0" y="328" width="1920" height="21" fill="#1c1c1c"/><rect x="0" y="348" width="1920" height="2" fill="#080808"/>
<text class="m w b" x="964" y="338" font-size="5.5">No Object Selected</text>
<rect x="583.5" y="297" width="60.5" height="11" fill="#1e1e1e" stroke="#333"/><text x="586" y="302.5" font-size="6.5">Configurations</text><text class="w" x="637" y="302.5" font-size="4.5">▼</text>
<rect x="647" y="297" width="13" height="11" fill="#1e1e1e"/><rect x="651" y="299" width="5" height="6" fill="none" stroke="#ddd"/><rect x="661" y="297" width="9" height="11" fill="#1e1e1e"/><rect x="663" y="299" width="5" height="7" fill="none" stroke="#ddd"/>
<rect x="673" y="297" width="76" height="11" fill="#424242"/>
<g class="w m b" font-size="6.5"><text x="679" y="302.7">M</text><text x="692" y="302.7">S</text><text class="g" x="704" y="302.7">L</text><text x="717" y="302.7">R</text><text x="729" y="302.7">W</text><text x="742" y="302.7">A</text></g>
<rect x="751" y="297" width="13" height="11" fill="#e6e6e6"/><path d="M757.5 299l3 7h-6z" fill="#111"/>
<rect x="764" y="297" width="50" height="11" fill="#1e1e1e"/><text x="767" y="302.5" font-size="6.5">Touch</text><text class="w" x="806" y="302.5" font-size="4.5">▼</text>
<rect x="814" y="297" width="9" height="11" fill="#2b2b2b"/><text class="w m" x="818.5" y="302.5">e</text>
<rect x="825" y="297" width="13" height="11" fill="#404040"/><rect x="829" y="300" width="5" height="5" fill="#ccc"/><rect x="838" y="297" width="13" height="11" fill="#2a2a2a"/><text class="w m" x="844.5" y="302.5" font-size="4.5">▼</text>
<rect x="859.5" y="297" width="177.5" height="11" fill="#343434"/><rect x="859.5" y="297" width="12.5" height="11" fill="#e6e6e6"/><path d="M863 299l4.5 4-2 .5 1 3-2-.3z" fill="#111"/>
<g class="w m" font-size="7.5"><text x="878" y="302.5">I</text><text x="890" y="302.5">/</text><text x="902" y="302.5">◆</text><text x="914" y="302.5">✂</text><text x="927" y="302.5">↗</text><text x="940" y="302.5">✕</text><text x="953" y="302.5">⌕</text><text x="966" y="302.5">✋</text><text x="978" y="302.5">◤</text><text x="991" y="302.5">⌡</text><text x="1003" y="302.5">◀</text><text x="1015" y="302.5">♪</text><text x="1030" y="302.5">⁄</text></g>
<rect x="1042" y="297" width="13" height="11" fill="#3a3a3a"/><text class="w m" x="1048.5" y="302.5" font-size="7">⁑</text>
<rect x="1055" y="297" width="56" height="11" fill="#1e1e1e"/><text x="1058" y="302.5" font-size="6.5">Grid</text><text class="w" x="1103" y="302.5" font-size="4.5">▼</text>
<rect x="1114" y="297" width="69.5" height="11" fill="#1e1e1e"/><text x="1117" y="302.5" font-size="6.5" class="w">#</text><text x="1124" y="302.5" font-size="6.5">Use Quantize</text><text class="w" x="1175" y="302.5" font-size="4.5">▼</text>
<rect x="1186" y="297" width="11.5" height="11" fill="#404040"/><text class="w m b" x="1191.7" y="302.5" font-size="7">Q</text>
<rect x="1197.5" y="297" width="62.5" height="11" fill="#1e1e1e"/><text x="1200" y="302.5" font-size="6.5">1/16</text><text class="w" x="1252" y="302.5" font-size="4.5">▼</text>
<rect x="1261" y="297" width="10.5" height="11" fill="#3a3a3a"/><text class="w m" x="1266" y="302.5" font-size="6">%</text><rect x="1272.5" y="297" width="12.5" height="11" fill="#dcdcdc"/><rect x="1286" y="297" width="8" height="11" fill="#2b2b2b"/><text class="w m" x="1290" y="302.5">e</text><rect x="1296.5" y="297" width="13" height="11" fill="#3a3a3a"/><rect x="1300" y="299" width="1.5" height="7" fill="#ddd"/><rect x="1302" y="300" width="4" height="2" fill="#ddd"/><rect x="1302" y="303" width="5" height="2" fill="#ddd"/><path d="M1275.5 299.5l6 3-6 3z" fill="#222"/>
<g fill="#2f2f2f"><rect x="602" y="314" width="76" height="8.7"/><rect x="682.5" y="314" width="91.5" height="8.7"/><rect x="778" y="314" width="79.5" height="8.7"/><rect x="861" y="314" width="115" height="8.7"/><rect x="979.4" y="314" width="95.6" height="8.7"/><rect x="1079" y="314" width="79" height="8.7"/><rect x="1162" y="314" width="67" height="8.7"/><rect x="1233.5" y="314" width="89.5" height="8.7"/></g>
<g font-size="5.5" class="g"><text x="606" y="318.5">Audio Inputs</text><text x="686" y="318.5">Audio Outputs</text><text x="782" y="318.5">Control Room</text><text x="865" y="318.5">Max. Record Time</text><text x="983" y="318.5">Record Format</text><text x="1082" y="318.5">Project Frame Rate</text><text x="1165" y="318.5">Project Audio Pull</text><text x="1237" y="318.5">Project Pan Law</text></g>
<g font-size="5.5" class="b"><text x="647" y="318.5">Connected</text><text x="731" y="318.5">Not Connected</text><text x="825" y="318.5">Connected</text><text x="919" y="318.5">21166 hours 32 mins</text><text x="1029" y="318.5">44.1 kHz - 16 bit</text><text x="1137" y="318.5">30 fps</text><text x="1218" y="318.5">Off</text><text x="1286" y="318.5">Equal Power</text></g>

<!-- Inspector -->
<rect x="2" y="350" width="90" height="697" rx="3" fill="#262626" stroke="#444"/>
<rect x="41" y="350" width="52" height="12" fill="#1b1b1b"/>
<g class="w b" font-size="6.5"><text x="9" y="355.5">Inspector</text><text x="50" y="355.5">Visibility</text></g><rect x="85" y="353" width="4" height=".8" fill="#aaa"/><rect x="85" y="355" width="4" height=".8" fill="#aaa"/><rect x="85" y="357" width="4" height=".8" fill="#aaa"/>
<rect x="7.3" y="365.7" width="70.2" height="9" fill="#cdee28"/><rect x="77.5" y="365.7" width="9.5" height="9" fill="#4d4d4d"/><circle cx="82.2" cy="370.2" r="2.2" fill="none" stroke="#ddd"/><text class="d" x="16.5" y="370.2" font-size="6.5">Randomizer</text><text class="d" x="10" y="370.2" font-size="4">▼</text>
<g fill="#383838"><rect x="7.3" y="379" width="13" height="8.7"/><rect x="21" y="379" width="12" height="8.7"/><rect x="35.5" y="379" width="12.5" height="8.7"/><rect x="48" y="379" width="12.5" height="8.7"/><rect x="61" y="379" width="12.5" height="8.7"/><rect x="74" y="379" width="13" height="8.7"/><rect x="21" y="388.3" width="12" height="9.4"/><rect x="48" y="388.3" width="12.5" height="9.4"/><rect x="61" y="388.3" width="12.5" height="9.4"/><rect x="74" y="388.3" width="13" height="9.4"/></g>
<rect x="7.3" y="388.3" width="13" height="9.4" fill="#f0103a"/><circle cx="13.8" cy="393" r="2" fill="#200"/><rect x="35.5" y="388.3" width="12.5" height="9.4" fill="#c98d52"/><rect x="25" y="391" width="3" height="4" fill="#bbb"/><rect x="52" y="391" width="4" height="4" fill="#bbb"/><rect x="65" y="391" width="3" height="4" fill="#777"/><circle cx="80.5" cy="393" r="1.6" fill="#999"/>
<g class="m b" font-size="6"><text x="14" y="383.5">M</text><text x="27" y="383.5">S</text><text x="41.5" y="383.5">R</text><text x="54.5" y="383.5">W</text><text x="67.5" y="383.5">L</text></g>
<rect x="7.3" y="404" width="79.7" height="8.7" fill="#1e1e1e"/><rect x="7.3" y="413.4" width="79.7" height="8.7" fill="#1e1e1e"/><rect x="7.3" y="422.7" width="79.7" height="9" fill="#1e1e1e"/>
<rect x="18" y="407.5" width="33.5" height="2" fill="#2b9ce0"/><rect x="51.5" y="407.5" width="11.5" height="2" fill="#444"/><circle cx="51.5" cy="408.5" r="2" fill="#eee"/><rect x="18" y="417" width="45" height="2" fill="#3a3a3a"/><circle cx="40" cy="418" r="2" fill="#eee"/>
<rect x="10" y="406" width="5" height="5" fill="#bbb"/><rect x="10" y="415" width="5" height="5" fill="#bbb"/><circle cx="12" cy="427" r="2.2" fill="none" stroke="#bbb"/>
<g class="e" font-size="5.5"><text x="85" y="408.5">0.00 dB</text><text x="85" y="418">C</text><text x="85" y="427">0.00 ms</text></g>
<rect x="7.3" y="438" width="79.7" height="9.3" fill="#1e1e1e" stroke="#383838"/><rect x="9.5" y="440" width="5.5" height="5.5" rx="1.5" fill="#bbb"/><text class="g" x="17" y="442.8" font-size="5.5" font-style="italic">Track Presets...</text><text class="w e" x="85" y="442.8" font-size="4">▼</text>
<rect x="7.3" y="453.7" width="79.7" height="9.3" fill="#1e1e1e"/><rect x="7.3" y="463.5" width="79.7" height="9" fill="#1e1e1e"/><text x="17" y="458.5" font-size="5.5">Global</text><text x="9.5" y="468" font-size="5.5">No Extension</text><text class="w e" x="85" y="458.5" font-size="4">▼</text><text class="w e" x="85" y="468" font-size="4">▼</text>
<g fill="#666"><rect x="7.3" y="479.3" width="79.7" height="10" rx="1"/></g><rect x="7.3" y="518" width="79.7" height="10" rx="1" fill="#5a5a5a"/><rect x="7.3" y="531.7" width="79.7" height="9.7" rx="1" fill="#5a5a5a"/>
<g class="w" font-size="6.5"><text x="16.5" y="484.5">Routing</text><text x="16.5" y="523">Track Versions</text><text x="16.5" y="536.5">Quick Controls</text><text x="10" y="484.3" font-size="4">▶</text><text x="10" y="523" font-size="4">▶</text><text x="10" y="536.5" font-size="4">▶</text><text x="80" y="484.3" font-size="6">C</text><text x="80" y="523" font-size="6">U</text><text x="80" y="536.5" font-size="6">Q</text></g>
<rect x="7.3" y="492.7" width="79.7" height="9.3" fill="#1e1e1e"/><rect x="7.3" y="502.3" width="79.7" height="9.3" fill="#1e1e1e"/><text x="17" y="497.5" font-size="5.5">Stereo In</text><text x="17" y="507" font-size="5.5">SFX</text><text class="w e" x="85" y="497.5" font-size="4">▼</text><text class="w e" x="85" y="507" font-size="4">▼</text>

<!-- Project -->
<rect x="95" y="350" width="1625" height="238" rx="3" fill="#262626" stroke="#444"/>
<rect x="98" y="355" width="11" height="10" fill="#3c3c3c"/><text class="w m b" x="103.5" y="360" font-size="9">+</text><rect x="110" y="355" width="12.4" height="10" fill="#3c3c3c"/><rect x="113" y="358" width="6" height="5" rx="1" fill="#ccc"/>
<rect x="178" y="355" width="31" height="9" fill="#2e2e2e"/><text class="m g" x="191" y="359.5" font-size="5.5">29 / 29</text>
<rect x="210" y="355" width="25" height="9" fill="#1c1c1c"/><rect x="213" y="357" width="5" height="6" fill="none" stroke="#ddd"/><rect x="226" y="357" width="5" height="6" fill="none" stroke="#ddd"/>
<rect x="240" y="355" width="11" height="9" fill="#3c3c3c"/><circle cx="246" cy="359" r="2" fill="none" stroke="#ddd"/>
<rect x="98" y="365" width="155" height="215" fill="#0f0f0f"/>
<rect x="103.7" y="365" width="20" height="14.3" fill="#6480ee"/><rect x="124" y="365" width="123.5" height="14.3" fill="#262626"/>
<rect x="103.7" y="380.7" width="20" height="43.6" fill="#00e060"/><rect x="124" y="380.7" width="123.5" height="43.6" fill="#262626"/><rect x="105.5" y="384" width="6" height="5" fill="#111"/>
<rect x="103.7" y="425.7" width="20" height="43.6" fill="#ff0080"/><rect x="124" y="425.7" width="123.5" height="43.6" fill="#262626"/><rect x="105.5" y="429" width="6" height="5" fill="#300"/>
<g fill="#d0f020"><rect x="109" y="470.7" width="20.4" height="43.3"/><rect x="109" y="515.7" width="20.4" height="43.3"/><rect x="109" y="560.7" width="20.4" height="19.3"/></g>
<g fill="#3e4128"><rect x="130.6" y="470.7" width="116.9" height="43.3"/><rect x="130.6" y="515.7" width="116.9" height="43.3"/><rect x="130.6" y="560.7" width="116.9" height="19.3"/></g>
<g fill="#0e0e0e"><rect x="111" y="473" width="7" height="7"/><rect x="111" y="518" width="7" height="7"/><rect x="111" y="563" width="7" height="7"/></g>
<g fill="#d0f020"><rect x="113" y="476" width=".8" height="4"/><rect x="115.3" y="476" width=".8" height="4"/><rect x="113" y="521" width=".8" height="4"/><rect x="115.3" y="521" width=".8" height="4"/><rect x="113" y="566" width=".8" height="4"/><rect x="115.3" y="566" width=".8" height="4"/></g>
<g class="d" font-size="5.5"><text x="123" y="476">4</text><text x="123" y="521">5</text><text x="123" y="566">6</text></g>
<g fill="#383838"><rect x="127" y="382" width="22" height="8"/><rect x="127" y="427" width="22" height="8"/><rect x="155" y="392.3" width="47" height="8"/><rect x="155" y="437.7" width="47" height="8"/></g>
<g fill="#444a2c"><rect x="133" y="472" width="22" height="8"/><rect x="133" y="517" width="22" height="8"/><rect x="133" y="562" width="22" height="8"/><rect x="172" y="482" width="73" height="8"/><rect x="172" y="527" width="73" height="8"/><rect x="172" y="572" width="73" height="8"/><rect x="161" y="492.5" width="8" height="8"/><rect x="161" y="537.5" width="8" height="8"/></g>
<g fill="#c98d52"><rect x="160" y="482" width="10.6" height="8"/><rect x="160" y="527" width="10.6" height="8"/><rect x="160" y="572" width="10.6" height="8"/></g>
<g fill="#ececec"><rect x="172" y="492" width="10.5" height="9"/><rect x="172" y="537" width="10.5" height="9"/></g>
<g fill="#ddd"><circle cx="160" cy="396.3" r="1.4"/><circle cx="160" cy="441.7" r="1.4"/><circle cx="177.5" cy="486" r="1.4"/><circle cx="177.5" cy="531" r="1.4"/><circle cx="177.5" cy="576" r="1.4"/>
<rect x="170" y="394.5" width="3" height="3.5"/><rect x="182" y="395" width="5" height="2.5"/><rect x="194" y="394" width="3" height="4"/><rect x="170" y="440" width="3" height="3.5"/><rect x="182" y="440.5" width="5" height="2.5"/><rect x="194" y="439.5" width="3" height="4"/>
<rect x="188" y="484" width="3" height="4"/><rect x="200" y="484" width="4" height="4"/><rect x="212" y="484" width="5" height="4"/><rect x="188" y="529" width="3" height="4"/><rect x="200" y="529" width="4" height="4"/><rect x="212" y="529" width="5" height="4"/><rect x="188" y="574" width="3" height="4"/><rect x="200" y="574" width="4" height="4"/><rect x="212" y="574" width="5" height="4"/></g>
<g fill="#111"><rect x="164" y="484" width="1.2" height="4"/><rect x="164" y="529" width="1.2" height="4"/><rect x="164" y="574" width="1.2" height="4"/><rect x="175" y="494" width="5.5" height="5"/><rect x="175" y="539" width="5.5" height="5"/></g>
<g class="m b" font-size="6"><text x="132" y="386">M</text><text x="144" y="386">S</text><text x="132" y="431">M</text><text x="144" y="431">S</text><text x="137.5" y="476">M</text><text x="150" y="476">S</text><text x="137.5" y="521">M</text><text x="150" y="521">S</text><text x="137.5" y="566">M</text><text x="150" y="566">S</text>
<text x="227" y="486">R</text><text x="240" y="486">W</text><text x="227" y="531">R</text><text x="240" y="531">W</text><text x="227" y="576">R</text><text x="240" y="576">W</text></g>
<g class="w b" font-size="6.5"><text x="155.5" y="386.3">Music</text><text x="155.5" y="431.3">SFX</text><text x="160.8" y="476">Stepmaker</text><text x="160.8" y="521">Reformer</text><text x="160.8" y="566">SFX Maker</text></g>
<rect x="253" y="352.7" width="2" height="235" fill="#444"/>
<rect x="255" y="352.7" width="1457" height="12.3" fill="url(#rul)"/>
<g class="d b" font-size="5.5"><text x="375" y="360">2</text><text x="526" y="360">3</text><text x="676" y="360">4</text><text x="826" y="360">5</text><text x="976" y="360">6</text><text x="1126" y="360">7</text><text x="1276" y="360">8</text><text x="1426" y="360">9</text><text x="1576" y="360">10</text></g>
<rect x="255" y="365" width="1457" height="215" fill="url(#evt)"/>
<rect x="458" y="352.7" width="1.6" height="227.3" fill="#b8c0c8"/>
<rect x="255" y="580" width="1465" height="7" fill="#2d2d2d"/><rect x="265" y="581.3" width="42" height="3.7" rx="1" fill="#f2f2f2"/>
<rect x="1712" y="352.7" width="8" height="234" fill="#3c3c3c"/>
<rect x="1713" y="428" width="4.5" height="20" fill="#eee"/><rect x="1714" y="373" width="1.5" height="18" fill="#5a5a5a"/><circle cx="1715" cy="393.5" r="2" fill="#eee"/><circle cx="1715" cy="550" r="2" fill="#eee"/>
<rect x="1660" y="582" width="40" height="2" fill="#4a4a4a"/>

<!-- Right zone -->
<rect x="1722" y="347" width="198" height="15" fill="#1b1b1b"/><rect x="1723" y="361.7" width="195" height="683" rx="3" fill="#282828" stroke="#4c4c4c"/>
<path d="M1757 362v-10h41v10" fill="#282828" stroke="#4c4c4c"/>
<g class="w b m" font-size="6.5"><text x="1740" y="355.5">VSTi</text><text x="1777.7" y="355.5">Media</text><text x="1813" y="355.5">CR</text><text x="1848" y="355.5">Meter</text></g>
<rect x="1727" y="365.7" width="172" height="9.3" rx="1" fill="#1a1a1a" stroke="#333"/><circle cx="1732.5" cy="370" r="2" fill="none" stroke="#aaa"/><text class="g" x="1737" y="370.3" font-size="5.5">Search</text>
<rect x="1902" y="365.7" width="11.5" height="9.3" fill="#4a4a4a"/><rect x="1904" y="368" width="7.5" height=".9" fill="#ddd"/><rect x="1904" y="370" width="7.5" height=".9" fill="#ddd"/><rect x="1904" y="372" width="7.5" height=".9" fill="#ddd"/>
<text class="g m" x="1732" y="383" font-size="8">←</text><path d="M1743.5 379.5l3.5 3h-1v3h-5v-3h-1z" fill="#ddd"/>
<rect x="1728" y="390" width="185" height=".7" fill="#555"/>
<g fill="#a7abad"><rect x="1763" y="409.3" width="36" height="35"/><rect x="1842" y="409.3" width="36" height="35"/><rect x="1763" y="471.3" width="36" height="35"/><rect x="1842" y="471.3" width="36" height="35"/><rect x="1763" y="533.3" width="36" height="35"/><rect x="1842" y="533.3" width="36" height="35"/><rect x="1763" y="595.3" width="36" height="35"/></g>
<rect x="1770" y="416" width="22" height="21.5" rx="1" fill="#2a2a2a"/><g fill="#a7abad"><rect x="1774.5" y="428" width="1" height="9.5"/><rect x="1780.5" y="428" width="1" height="9.5"/><rect x="1786.5" y="428" width="1" height="9.5"/><rect x="1777" y="416" width="1" height="12"/><rect x="1784" y="416" width="1" height="12"/></g>
<text class="m b" x="1860" y="427" font-size="19" style="fill:#2a2a2a">FX</text>
<path d="M1775 482.5A8.6 8.6 0 1 1 1773.3 492" fill="none" stroke="#2a2a2a" stroke-width="3"/><path d="M1769.5 488.5h8.5l-4.2 6z" fill="#2a2a2a"/>
<path d="M1847.2 485l3.8-6.5h7.5l3.8 6.5-3.8 6.5H1851z" fill="#2a2a2a"/><path d="M1860 493.7l2.8-4.8h5.6l2.8 4.8-2.8 4.8h-5.6z" fill="#2a2a2a"/>
<path d="M1769.3 547.3l4-7h8l4 7-4 7h-8z" fill="#2a2a2a"/><circle cx="1784.5" cy="549.5" r="3.5" fill="#2a2a2a" stroke="#a7abad"/><path d="M1779 560c0-7 11-7 11 0z" fill="#2a2a2a" stroke="#a7abad" stroke-width=".6"/>
<rect x="1846.7" y="544" width="26" height="9" rx="1" fill="#2a2a2a"/><circle cx="1865.5" cy="547.7" r="1" fill="#a7abad"/><circle cx="1870" cy="547.7" r="1" fill="#a7abad"/><circle cx="1855" cy="553.3" r="5" fill="#a7abad" stroke="#2a2a2a" stroke-width="1.5"/><path d="M1858.5 557l4.5 4.5" stroke="#2a2a2a" stroke-width="1.8"/>
<path d="M1781 600.7l2.9 7.9 8.5.4-6.6 5.2 2.2 8.2-7-4.7-7 4.7 2.2-8.2-6.6-5.2 8.5-.4z" fill="#2a2a2a"/>
<g class="m" font-size="6.3"><text x="1780.7" y="454" style="fill:#ccc">VST Instruments</text><text x="1859" y="454" style="fill:#ccc">VST Effects</text><text x="1780.7" y="516" style="fill:#ccc">Loops &amp; Samples</text><text x="1859" y="516" style="fill:#ccc">Presets</text><text x="1780.7" y="578" style="fill:#ccc">User Presets</text><text x="1859" y="578" style="fill:#ccc">File Browser</text><text x="1780.7" y="640" style="fill:#ccc">Favorites</text></g>

<!-- MixConsole -->
<rect x="95.5" y="592" width="1624.5" height="441" rx="3" fill="#282828" stroke="#b8b8b8"/>
<rect x="96" y="610.5" width="1623" height="1" fill="#3a3a3a"/>
<rect x="100" y="596" width="26" height="12" fill="#3c3c3c"/><g fill="none" stroke="#bbb"><path d="M104 600v2.5h2.5M104.4 602.5a2.5 2.5 0 1 1 .7 2.2"/><path d="M122 600v2.5h-2.5M121.6 602.5a2.5 2.5 0 1 0-.7 2.2"/></g><rect x="127" y="596" width="13" height="12" fill="#4c4c4c"/><rect x="130" y="599" width="7" height="5" fill="#ccc"/><rect x="140" y="596" width="11" height="12" fill="#222"/><text class="w m" x="145.5" y="602" font-size="4.5">▼</text>
<rect x="796" y="596" width="11" height="12" fill="#353535"/><circle cx="801" cy="601" r="2.5" fill="none" stroke="#ccc"/><rect x="809" y="596" width="11" height="12" fill="#353535"/><rect x="812" y="599" width="5" height="5" fill="none" stroke="#ccc"/>
<rect x="826" y="596" width="25" height="12" fill="#3c3c3c"/><text class="m" x="838" y="602">Link</text><rect x="853" y="596" width="11" height="12" fill="#303030"/><rect x="866" y="596" width="11" height="12" fill="#303030"/>
<rect x="884" y="596" width="20" height="12" fill="#3c3c3c"/><rect x="906" y="596" width="22" height="12" fill="#3c3c3c"/><rect x="935" y="596" width="32" height="12" fill="#3c3c3c"/><text class="m" x="894" y="602">Sus</text><text class="m" x="917" y="602">Abs</text><text class="m" x="951" y="602">Q-Link</text>
<rect x="968.6" y="596" width="69" height="12" fill="#3c3c3c"/><rect x="993" y="596" width="20" height="12" fill="#222"/><text class="m" x="1003" y="602" font-size="6.5">35</text>
<g class="w m" font-size="6"><text x="975" y="602">⧓</text><text x="987" y="602">◆</text><text x="1020" y="602">⧗</text><text x="1031" y="602">⬍</text></g>
<rect x="1675" y="596" width="13" height="12" fill="#3c3c3c"/><circle cx="1681.5" cy="602" r="2.6" fill="none" stroke="#ccc"/><rect x="1700" y="596" width="12" height="12" fill="#3c3c3c"/><path d="M1703 605l6-6m-4 0h4v4" fill="none" stroke="#ddd"/>
<rect x="1712" y="612" width="7" height="412" fill="#333"/>
<g>
<use href="#s" x="99"/><use href="#s" x="144.5"/><use href="#s" x="190"/><use href="#s" x="235.5"/><use href="#s" x="281"/><use href="#s" x="326.5"/><use href="#s" x="372"/><use href="#s" x="417.5"/><use href="#s" x="463"/><use href="#s" x="508.5"/><use href="#s" x="554"/><use href="#s" x="599.5"/><use href="#s" x="645"/><use href="#s" x="690.5"/><use href="#s" x="736"/><use href="#s" x="781.5"/><use href="#s" x="827"/><use href="#s" x="872.5"/><use href="#s" x="918"/><use href="#s" x="963.5"/><use href="#s" x="1009"/><use href="#s" x="1054.5"/>
</g>
<rect x="100" y="803" width="43" height="21" fill="#282828"/><rect x="100" y="984" width="43" height="12" fill="#282828"/><rect x="100" y="984" width="21" height="8.3" fill="#383838"/><rect x="121.6" y="984" width="21" height="8.3" fill="#383838"/>
<!-- blue line -->
<rect x="99" y="640.2" width="1001" height="1" fill="#1b8fd0"/>
<rect x="96" y="882" width="1616" height="1.6" fill="#5a5a5a"/>
<!-- names top -->
<g fill="#6e6e6e"><rect x="99" y="612.7" width="44" height="9.7"/><rect x="1054.5" y="612.7" width="44" height="9.7"/></g>
<rect x="145" y="612.7" width="44" height="9.7" fill="#a020b0"/><rect x="190.5" y="612.7" width="44" height="9.7" fill="#6480ee"/><rect x="236" y="612.7" width="44" height="9.7" fill="#00e040"/>
<g fill="#cdee28"><rect x="281.5" y="612.7" width="44" height="9.7"/><rect x="327" y="612.7" width="44" height="9.7"/><rect x="372.5" y="612.7" width="44" height="9.7"/><rect x="418" y="612.7" width="44" height="9.7"/><rect x="463.5" y="612.7" width="44" height="9.7"/></g>
<g fill="#ff0080"><rect x="509" y="612.7" width="44" height="9.7"/><rect x="554.5" y="612.7" width="44" height="9.7"/><rect x="600" y="612.7" width="44" height="9.7"/><rect x="645.5" y="612.7" width="44" height="9.7"/><rect x="691" y="612.7" width="44" height="9.7"/><rect x="736.5" y="612.7" width="44" height="9.7"/><rect x="782" y="612.7" width="44" height="9.7"/><rect x="827.5" y="612.7" width="44" height="9.7"/><rect x="873" y="612.7" width="44" height="9.7"/><rect x="918.5" y="612.7" width="44" height="9.7"/><rect x="1009.5" y="612.7" width="44" height="9.7"/></g>
<rect x="964" y="612.7" width="44" height="9.7" fill="#00e040"/>
<g class="d" font-size="6" transform="translate(0,617.6)"><text class="w" x="101" style="fill:#ddd">Stereo In</text><text class="w" x="150" style="fill:#eee">_Tempaudio</text><text x="192">VO</text><text x="238">Music</text><text x="283">Stepmaker</text><text x="329">Reformer</text><text x="374.5">SFX Maker</text><text x="420">Convolver</text><text x="465">Randomizer</text><text x="511" font-size="5.5">SFX 1 (Stereo)</text><text x="556" font-size="5.5">SFX 2 (Stereo)</text><text x="602" font-size="5.5">SFX 3 (Stereo)</text><text x="647" font-size="5.5">SFX 4 (Stereo)</text><text x="693" font-size="5.5">SFX 5 (Mono)</text><text x="738" font-size="5.5">SFX 6 (Mono)</text><text x="784" font-size="5.5">SFX 7 (Mono)</text><text x="829" font-size="5.5">SFX 8 (Mono)</text><text x="875" font-size="5.5">SFX 9 (Mono)</text><text x="920" font-size="5">SFX 10 (Mono)</text><text x="966">Music</text><text x="1011">SFX</text><text class="w" x="1057" style="fill:#ddd">Stereo Out</text></g>
<g font-size="6.5" transform="translate(0,663.2)"><text x="102">Routing</text><text x="147.5">Routing</text><text x="193">Routing</text><text x="238.5">Routing</text><text x="284">Routing</text><text x="329.5">Routing</text><text x="375">Routing</text><text x="420.5">Routing</text><text x="466">Routing</text><text x="511.5">Routing</text><text x="557">Routing</text><text x="602.5">Routing</text><text x="648">Routing</text><text x="693.5">Routing</text><text x="739">Routing</text><text x="784.5">Routing</text><text x="830">Routing</text><text x="875.5">Routing</text><text x="921">Routing</text><text x="966.5">Routing</text><text x="1012">Routing</text><text x="1057.5">Routing</text></g>
<g class="g" font-size="5.3" transform="translate(0,676.5)"><text x="147.5">Stereo In</text><text x="193">Stereo In</text><text x="238.5">Stereo In</text><text x="284">KOMPL.1</text><text x="329.5">KOMPL.1</text><text x="375">All MIDI I.</text><text x="420.5">Stereo In</text><text x="466">Stereo In</text><text x="511.5">Stereo In</text><text x="557">Stereo In</text><text x="602.5">Stereo In</text><text x="648">Stereo In</text><text x="693.5">Left - Stereo In</text><text x="739">Left - Stereo In</text><text x="784.5">Left - Stereo In</text><text x="830">Left - Stereo In</text><text x="875.5">Left - Stereo In</text><text x="921">Left - Stereo In</text></g>
<g class="g" font-size="5.3" transform="translate(0,686)"><text x="147.5">Stereo Out</text><text x="193">Stereo Out</text><text x="238.5">Music</text><text x="284">Stereo Out</text><text x="329.5">Stereo Out</text><text x="375">SFX</text><text x="420.5">SFX</text><text x="466">SFX</text><text x="511.5">SFX</text><text x="557">SFX</text><text x="602.5">SFX</text><text x="648">SFX</text><text x="693.5">SFX</text><text x="739">SFX</text><text x="784.5">SFX</text><text x="830">SFX</text><text x="875.5">SFX</text><text x="921">SFX</text><text x="966.5">Stereo Out</text><text x="1012">Stereo Out</text></g>
<g font-size="6.5" transform="translate(0,702.2)"><text x="102">Inserts</text><text x="147.5">Inserts</text><text x="193">Inserts</text><text x="238.5">Inserts</text><text x="284">Inserts</text><text x="329.5">Inserts</text><text x="375">Inserts</text><text x="420.5">Inserts</text><text x="466">Inserts</text><text x="511.5">Inserts</text><text x="557">Inserts</text><text x="602.5">Inserts</text><text x="648">Inserts</text><text x="693.5">Inserts</text><text x="739">Inserts</text><text x="784.5">Inserts</text><text x="830">Inserts</text><text x="875.5">Inserts</text><text x="921">Inserts</text><text x="966.5">Inserts</text><text x="1012">Inserts</text><text x="1057.5">Inserts</text></g>
<g fill="#2f97d8"><rect x="226" y="700" width="5.5" height="4" rx="1"/><rect x="317" y="700" width="5.5" height="4" rx="1"/><rect x="362.5" y="700" width="5.5" height="4" rx="1"/><rect x="454" y="700" width="5.5" height="4" rx="1"/><rect x="499.5" y="700" width="5.5" height="4" rx="1"/><rect x="1000.5" y="700" width="5.5" height="4" rx="1"/><rect x="1046" y="700" width="5.5" height="4" rx="1"/><rect x="1091.5" y="700" width="5.5" height="4" rx="1"/></g>
<g fill="#0a7c96"><rect x="191" y="711" width="43" height="8.7"/><rect x="282" y="711" width="43" height="8.7"/><rect x="327.5" y="711" width="43" height="8.7"/><rect x="418.5" y="711" width="43" height="8.7"/><rect x="464" y="711" width="43" height="8.7"/><rect x="1055.5" y="711" width="43" height="8.7"/><rect x="964.5" y="722" width="43" height="8.7"/><rect x="1010" y="722" width="43" height="8.7"/></g>
<g fill="#454f5a"><rect x="964.5" y="711" width="43" height="8.7"/><rect x="1010" y="711" width="43" height="8.7"/></g>
<g font-size="4.6" transform="translate(0,715.5)"><text x="192.5" style="fill:#bde">Neutron 5</text><text x="283.5" style="fill:#bde">AutoPan</text><text x="329" style="fill:#bde">Reformer Pro</text><text x="420" style="fill:#bde">Vrhi Convolver</text><text x="465.5" style="fill:#bde">Randomizer</text><text x="966" style="fill:#99a">Ozone 11 Vinta...er</text><text x="1011.5" style="fill:#99a">Ozone 11 Vinta...er</text><text x="1057" style="fill:#bde">Ozone 11</text></g>
<g font-size="4.6" transform="translate(0,726.5)"><text x="966" style="fill:#bde">Ozone 11 Maxi...er</text><text x="1011.5" style="fill:#bde">Ozone 11 Maxi...er</text></g>
<g font-size="6.5" transform="translate(0,757.2)"><text x="102">Sends</text><text x="147.5">Sends</text><text x="193">Sends</text><text x="238.5">Sends</text><text x="284">Sends</text><text x="329.5">Sends</text><text x="375">Sends</text><text x="420.5">Sends</text><text x="466">Sends</text><text x="511.5">Sends</text><text x="557">Sends</text><text x="602.5">Sends</text><text x="648">Sends</text><text x="693.5">Sends</text><text x="739">Sends</text><text x="784.5">Sends</text><text x="830">Sends</text><text x="875.5">Sends</text><text x="921">Sends</text><text x="966.5">Sends</text><text x="1012">Sends</text><text x="1057.5">Sends</text></g>
<g font-size="6.5" transform="translate(0,795.4)"><text x="102">Cue Sends</text><text x="147.5">Cue Sends</text><text x="193">Cue Sends</text><text x="238.5">Cue Sends</text><text x="284">Cue Sends</text><text x="329.5">Cue Sends</text><text x="375">Cue Sends</text><text x="420.5">Cue Sends</text><text x="466">Cue Sends</text><text x="511.5">Cue Sends</text><text x="557">Cue Sends</text><text x="602.5">Cue Sends</text><text x="648">Cue Sends</text><text x="693.5">Cue Sends</text><text x="739">Cue Sends</text><text x="784.5">Cue Sends</text><text x="830">Cue Sends</text><text x="875.5">Cue Sends</text><text x="921">Cue Sends</text><text x="966.5">Cue Sends</text><text x="1012">Cue Sends</text><text x="1057.5">Cue Sends</text></g>
<g font-size="4.6" transform="translate(0,808.4)"><text x="148.5">Cue 1</text><text x="194">Cue 1</text><text x="239.5">Cue 1</text><text x="285">Cue 1</text><text x="330.5">Cue 1</text><text x="376">Cue 1</text><text x="421.5">Cue 1</text><text x="467">Cue 1</text><text x="512.5">Cue 1</text><text x="558">Cue 1</text><text x="603.5">Cue 1</text><text x="649">Cue 1</text><text x="694.5">Cue 1</text><text x="740">Cue 1</text><text x="785.5">Cue 1</text><text x="831">Cue 1</text><text x="876.5">Cue 1</text><text x="922">Cue 1</text><text x="967.5">Cue 1</text><text x="1013">Cue 1</text><text x="1058.5">Cue 1</text></g>
<g class="e g" font-size="5" transform="translate(0,819.2)"><text x="187">C</text><text x="232.5">C</text><text x="278">C</text><text x="323.5">C</text><text x="369">C</text><text x="414.5">C</text><text x="460">C</text><text x="505.5">C</text><text x="551">C</text><text x="596.5">C</text><text x="642">C</text><text x="687.5">C</text><text x="733">C</text><text x="778.5">C</text><text x="824">C</text><text x="869.5">C</text><text x="915">C</text><text x="960.5">C</text><text x="1006">C</text><text x="1051.5">C</text><text x="1097">C</text></g>
<g font-size="6.5" class="b" transform="translate(0,835)"><text x="102">VCA</text><text x="147.5">VCA</text><text x="193">VCA</text><text x="238.5">VCA</text><text x="284">VCA</text><text x="329.5">VCA</text><text x="375">VCA</text><text x="420.5">VCA</text><text x="466">VCA</text><text x="511.5">VCA</text><text x="557">VCA</text><text x="602.5">VCA</text><text x="648">VCA</text><text x="693.5">VCA</text><text x="739">VCA</text><text x="784.5">VCA</text><text x="830">VCA</text><text x="875.5">VCA</text><text x="921">VCA</text><text x="966.5">VCA</text><text x="1012">VCA</text><text x="1057.5">VCA</text></g>
<!-- MS / L / RW -->
<g class="m b" font-size="5.8" transform="translate(0,890)"><text x="111">M</text><text x="156.5">M</text><text x="177.5">S</text><text x="202">M</text><text x="223">S</text><text x="247.5">M</text><text x="268.5">S</text><text x="293">M</text><text x="314">S</text><text x="338.5">M</text><text x="359.5">S</text><text x="384">M</text><text x="405">S</text><text x="429.5">M</text><text x="450.5">S</text><text x="475">M</text><text x="496">S</text><text x="520.5">M</text><text x="541.5">S</text><text x="566">M</text><text x="587">S</text><text x="611.5">M</text><text x="632.5">S</text><text x="657">M</text><text x="678">S</text><text x="702.5">M</text><text x="723.5">S</text><text x="748">M</text><text x="769">S</text><text x="793.5">M</text><text x="814.5">S</text><text x="839">M</text><text x="860">S</text><text x="884.5">M</text><text x="905.5">S</text><text x="930">M</text><text x="951">S</text><text x="975.5">M</text><text x="996.5">S</text><text x="1021">M</text><text x="1042">S</text><text x="1066.5">M</text><text x="1087.5">S</text></g>
<rect x="486" y="895" width="21" height="8.3" fill="#eee"/>
<g class="m b" font-size="5.8" transform="translate(0,899.2)"><text x="111">L</text><text x="132">Ø</text><text x="156.5">L</text><text x="177.5">Ø</text><text x="202">L</text><text x="223">Ø</text><text x="247.5">L</text><text x="268.5">Ø</text><text x="293">L</text><text x="314">Ø</text><text x="338.5">L</text><text x="359.5">Ø</text><text x="384">L</text><text x="405">Ø</text><text x="429.5">L</text><text x="450.5">Ø</text><text x="475">L</text><text class="d" x="496">Ø</text><text x="520.5">L</text><text x="541.5">Ø</text><text x="566">L</text><text x="587">Ø</text><text x="611.5">L</text><text x="632.5">Ø</text><text x="657">L</text><text x="678">Ø</text><text x="702.5">L</text><text x="723.5">Ø</text><text x="748">L</text><text x="769">Ø</text><text x="793.5">L</text><text x="814.5">Ø</text><text x="839">L</text><text x="860">Ø</text><text x="884.5">L</text><text x="905.5">Ø</text><text x="930">L</text><text x="951">Ø</text><text x="975.5">L</text><text x="996.5">Ø</text><text x="1021">L</text><text x="1042">Ø</text><text x="1066.5">L</text><text x="1087.5">Ø</text></g>
<g class="m w" font-size="4.8" transform="translate(0,912.6)"><text x="121.5">C</text><text x="167">C</text><text x="212.5">C</text><text x="258">C</text><text x="303.5">C</text><text x="349">C</text><text x="394.5">C</text><text x="440">C</text><text x="485.5">C</text><text x="531">C</text><text x="576.5">C</text><text x="622">C</text><text x="667.5">C</text><text x="713">C</text><text x="758.5">C</text><text x="804">C</text><text x="849.5">C</text><text x="895">C</text><text x="940.5">C</text><text x="986">C</text><text x="1031.5">C</text><text x="1077">C</text></g>
<!-- fader handles -->
<g fill="#e8324a"><rect x="102" y="925" width="5" height="11.5"/><rect x="1057.5" y="925" width="5" height="11.5"/></g>
<g fill="#8fd0cc"><rect x="147.5" y="925" width="5" height="11.5"/><rect x="193" y="925" width="5" height="11.5"/><rect x="238.5" y="925" width="5" height="11.5"/><rect x="420.5" y="925" width="5" height="11.5"/><rect x="466" y="925" width="5" height="11.5"/><rect x="511.5" y="925" width="5" height="11.5"/><rect x="557" y="925" width="5" height="11.5"/><rect x="602.5" y="925" width="5" height="11.5"/><rect x="648" y="925" width="5" height="11.5"/><rect x="693.5" y="925" width="5" height="11.5"/><rect x="739" y="925" width="5" height="11.5"/><rect x="784.5" y="925" width="5" height="11.5"/><rect x="830" y="925" width="5" height="11.5"/><rect x="875.5" y="925" width="5" height="11.5"/><rect x="921" y="925" width="5" height="11.5"/></g>
<g fill="#d6d68c"><rect x="284" y="925" width="5" height="11.5"/><rect x="329.5" y="925" width="5" height="11.5"/><rect x="375" y="925" width="5" height="11.5"/></g>
<g fill="#2f9fd0"><rect x="966.5" y="925" width="5" height="11.5"/><rect x="1012" y="928" width="5" height="11.5"/></g>
<!-- values -->
<g class="m" font-size="5.3" transform="translate(0,966.9)"><text x="111">0.00</text><text x="132">-oo</text><text x="156.5">0.00</text><text x="177.5">-oo</text><text x="202">0.00</text><text x="223">-oo</text><text x="247.5">0.00</text><text x="268.5">-oo</text><text x="293">0.00</text><text x="314">-2.6</text><text x="338.5">0.00</text><text x="359.5">-oo</text><text x="384">0.00</text><text x="405">-oo</text><text x="429.5">0.00</text><text x="450.5">-oo</text><text x="475">0.00</text><text x="496">-oo</text><text x="520.5">0.00</text><text x="541.5">-oo</text><text x="566">0.00</text><text x="587">-oo</text><text x="611.5">0.00</text><text x="632.5">-oo</text><text x="657">0.00</text><text x="678">-oo</text><text x="702.5">0.00</text><text x="723.5">-oo</text><text x="748">0.00</text><text x="769">-oo</text><text x="793.5">0.00</text><text x="814.5">-oo</text><text x="839">0.00</text><text x="860">-oo</text><text x="884.5">0.00</text><text x="905.5">-oo</text><text x="930">0.00</text><text x="951">-oo</text><text x="975.5">0.00</text><text x="996.5">-oo</text><text x="1021">-2.50</text><text x="1042">-oo</text><text x="1066.5">0.00</text><text x="1087.5">-2.6</text></g>
<g class="m b" font-size="5.8" transform="translate(0,979)"><text x="111">R</text><text x="132">W</text><text x="156.5">R</text><text x="177.5">W</text><text x="202">R</text><text x="223">W</text><text x="247.5">R</text><text x="268.5">W</text><text x="293">R</text><text x="314">W</text><text x="338.5">R</text><text x="359.5">W</text><text x="384">R</text><text x="405">W</text><text x="429.5">R</text><text x="450.5">W</text><text x="475">R</text><text x="496">W</text><text x="520.5">R</text><text x="541.5">W</text><text x="566">R</text><text x="587">W</text><text x="611.5">R</text><text x="632.5">W</text><text x="657">R</text><text x="678">W</text><text x="702.5">R</text><text x="723.5">W</text><text x="748">R</text><text x="769">W</text><text x="793.5">R</text><text x="814.5">W</text><text x="839">R</text><text x="860">W</text><text x="884.5">R</text><text x="905.5">W</text><text x="930">R</text><text x="951">W</text><text x="975.5">R</text><text x="996.5">W</text><text x="1021">R</text><text x="1042">W</text><text x="1066.5">R</text><text x="1087.5">W</text></g>
<g fill="#ddd"><circle cx="156.5" cy="988" r="1.7"/><circle cx="202" cy="988" r="1.7"/><circle cx="247.5" cy="988" r="1.7"/><circle cx="293" cy="988" r="1.7"/><circle cx="338.5" cy="988" r="1.7"/><circle cx="384" cy="988" r="1.7"/><circle cx="429.5" cy="988" r="1.7"/><circle cx="520.5" cy="988" r="1.7"/><circle cx="566" cy="988" r="1.7"/><circle cx="611.5" cy="988" r="1.7"/><circle cx="657" cy="988" r="1.7"/><circle cx="702.5" cy="988" r="1.7"/><circle cx="748" cy="988" r="1.7"/><circle cx="793.5" cy="988" r="1.7"/><circle cx="839" cy="988" r="1.7"/><circle cx="884.5" cy="988" r="1.7"/><circle cx="930" cy="988" r="1.7"/></g>
<g fill="#bbb"><rect x="176" y="986.5" width="3" height="3"/><rect x="221.5" y="986.5" width="3" height="3"/><rect x="267" y="986.5" width="3" height="3"/><rect x="312.5" y="986.5" width="3" height="3"/><rect x="358" y="986.5" width="3" height="3"/><rect x="403.5" y="986.5" width="3" height="3"/><rect x="449" y="986.5" width="3" height="3"/><rect x="494.5" y="986.5" width="3" height="3"/><rect x="540" y="986.5" width="3" height="3"/><rect x="585.5" y="986.5" width="3" height="3"/><rect x="631" y="986.5" width="3" height="3"/><rect x="676.5" y="986.5" width="3" height="3"/><rect x="722" y="986.5" width="3" height="3"/><rect x="767.5" y="986.5" width="3" height="3"/><rect x="813" y="986.5" width="3" height="3"/><rect x="858.5" y="986.5" width="3" height="3"/><rect x="904" y="986.5" width="3" height="3"/><rect x="949.5" y="986.5" width="3" height="3"/></g>
<rect x="464" y="984" width="21" height="8.3" fill="#f8103c"/><circle cx="474.5" cy="988" r="1.9" fill="#200"/>
<g class="e" font-size="6" transform="translate(0,1000.5)"><text x="142">1</text><text x="187.5">1</text><text x="233">2</text><text x="278.5">3</text><text x="324">4</text><text x="369.5">5</text><text x="415">6</text><text x="460.5">7</text><text x="506">8</text><text x="551.5">9</text><text x="597">10</text><text x="642.5">11</text><text x="688">12</text><text x="733.5">13</text><text x="779">14</text><text x="824.5">15</text><text x="870">16</text><text x="915.5">17</text><text x="961">18</text><text x="1006.5">19</text><text x="1052">20</text><text x="1097.5">1</text></g>
<!-- bottom colors -->
<rect x="99" y="1005.7" width="45.5" height="17.6" fill="#707070"/><rect x="144.5" y="1005.7" width="45.5" height="17.6" fill="#a822b8"/><rect x="190" y="1005.7" width="45.5" height="17.6" fill="#6480ee"/><rect x="235.5" y="1005.7" width="45.5" height="17.6" fill="#00e018"/><rect x="281" y="1005.7" width="182" height="17.6" fill="#cdee28"/><rect x="463" y="1005.7" width="45.5" height="14" fill="#ececec"/><rect x="463" y="1019.7" width="45.5" height="3.6" fill="#cdee28"/><rect x="508.5" y="1005.7" width="455" height="17.6" fill="#ff0080"/><rect x="963.5" y="1005.7" width="45.5" height="17.6" fill="#00e018"/><rect x="1009" y="1005.7" width="45.5" height="17.6" fill="#ff0080"/><rect x="1054.5" y="1005.7" width="45" height="17.6" fill="#707070"/>
<g fill="#141414" opacity=".35"><rect x="144" y="1005.7" width=".8" height="17.6"/><rect x="326.3" y="1005.7" width=".8" height="17.6"/><rect x="371.8" y="1005.7" width=".8" height="17.6"/><rect x="417.3" y="1005.7" width=".8" height="17.6"/><rect x="462.8" y="1005.7" width=".8" height="17.6"/><rect x="553.8" y="1005.7" width=".8" height="17.6"/><rect x="599.3" y="1005.7" width=".8" height="17.6"/><rect x="644.8" y="1005.7" width=".8" height="17.6"/><rect x="690.3" y="1005.7" width=".8" height="17.6"/><rect x="735.8" y="1005.7" width=".8" height="17.6"/><rect x="781.3" y="1005.7" width=".8" height="17.6"/><rect x="826.8" y="1005.7" width=".8" height="17.6"/><rect x="872.3" y="1005.7" width=".8" height="17.6"/><rect x="917.8" y="1005.7" width=".8" height="17.6"/></g>
<g class="d" font-size="6.6" transform="translate(0,1013.5)"><text x="101" style="fill:#ccc">Stereo In</text><text x="146" style="fill:#2c0c34">_Tempaudio</text><text x="192">VO</text><text x="237.5">Music</text><text x="283">Stepmaker</text><text x="328.5">Reformer</text><text x="374">SFX Maker</text><text x="419.5">Convolver</text><text x="465">Randomizer</text><text x="510.5" font-size="6" style="fill:#4a0028">SFX 1 (Stereo)</text><text x="556" font-size="6" style="fill:#4a0028">SFX 2 (Stereo)</text><text x="601.5" font-size="6" style="fill:#4a0028">SFX 3 (Stereo)</text><text x="647" font-size="6" style="fill:#4a0028">SFX 4 (Stereo)</text><text x="692.5" font-size="6" style="fill:#4a0028">SFX 5 (Mono)</text><text x="738" font-size="6" style="fill:#4a0028">SFX 6 (Mono)</text><text x="783.5" font-size="6" style="fill:#4a0028">SFX 7 (Mono)</text><text x="829" font-size="6" style="fill:#4a0028">SFX 8 (Mono)</text><text x="874.5" font-size="6" style="fill:#4a0028">SFX 9 (Mono)</text><text x="920" font-size="5.3" style="fill:#4a0028">SFX 10 (Mono)</text><text x="965.5">Music</text><text x="1011" style="fill:#4a0028">SFX</text><text x="1056.5" style="fill:#ccc">Stereo Out</text></g>
<rect x="99" y="1024" width="1613" height="7" fill="#3a3a3a"/>
<!-- Randomizer highlight -->
<rect x="463" y="622.4" width="45.5" height="383" fill="#fff" opacity=".24"/>
<rect x="463" y="622.4" width="45.5" height="32" fill="#000" opacity=".12"/>

<!-- Bottom tabs -->
<rect x="0" y="1034" width="1720" height="12" fill="#060606"/>
<rect x="1720" y="1045" width="200" height="2" fill="#1b1b1b"/>
<path d="M2 1034v9l2 2h42l2-2v-9" fill="#262626" stroke="#555"/>
<path d="M104 1046v-10l2-2h50l2 2v10" fill="#1a1a1a" stroke="#aaa"/><rect x="104" y="1034" width="54" height="1" fill="#282828"/><rect x="104" y="1045" width="54" height="1" fill="#c0c0c0"/>
<g class="w b m" font-size="6"><text x="19" y="1040">Track</text><text x="56" y="1040">Editor</text><text x="99" y="1040">X</text><text x="131" y="1040">MixConsole</text><text x="178" y="1040">Editor</text><text x="229" y="1040">Sampler Control</text><text x="291" y="1040">MIDI Remote</text><text x="347" y="1040">Chord Pads</text><text x="405" y="1040">Drum Machine</text><text x="463" y="1040">Modulators</text></g>

<!-- Transport -->
<rect x="0" y="1047" width="1920" height="19" fill="#262626"/>
<circle cx="8.5" cy="1056" r="3" fill="none" stroke="#bbb"/><rect x="17" y="1050.5" width="22" height="11" fill="#1c1c1c"/><circle cx="23" cy="1056" r="2" fill="#ddd"/><text class="w m" x="33" y="1056" font-size="4.5">▼</text>
<rect x="45" y="1050.5" width="22" height="11" fill="#1c1c1c"/><rect x="49" y="1055" width="8" height="1" fill="#ddd"/><rect x="52.5" y="1052.5" width="1" height="6" fill="#ddd"/><text class="w m" x="61" y="1056" font-size="4.5">▼</text>
<rect x="73" y="1050.5" width="22" height="11" fill="#1c1c1c"/><circle cx="79" cy="1056" r="3" fill="#bbb"/><text class="w m" x="89" y="1056" font-size="4.5">▼</text>
<rect x="100" y="1050.5" width="18" height="11" rx="1" fill="#444"/><text class="m" x="109" y="1056" font-size="6.5">AQ</text>
<rect x="543" y="1050" width="67" height="5.5" fill="#1e1e1e"/><rect x="543" y="1056.5" width="67" height="5.5" fill="#1e1e1e"/><rect x="543" y="1051" width="21" height="3.5" fill="#c8d4dc"/><rect x="613" y="1050" width="5" height="12" fill="#303030"/>
<rect x="627" y="1050" width="11" height="11.7" fill="#4a4a4a"/><path d="M630 1053h5l-2 2v4h-1v-3h-2z" fill="#eee"/>
<rect x="638" y="1050" width="63" height="11.7" fill="#171717" stroke="#333"/><text class="e" x="699" y="1056" font-size="7.3">0:00:00.000</text>
<rect x="707" y="1050" width="11" height="11.7" fill="#4a4a4a"/><path d="M710 1053h5v3h-1l-1 3-1-3h-2z" fill="#eee"/>
<rect x="718" y="1050" width="60.6" height="11.7" fill="#171717" stroke="#333"/><text class="e" x="777" y="1056" font-size="7.3">0:00:36.000</text>
<rect x="784" y="1049" width="175" height="15" rx="1" fill="#3f3f3f" stroke="#bdbdbd"/>
<rect x="885" y="1049.5" width="25" height="14" fill="#8f9aa2"/>
<g fill="none" stroke="#d8d8d8" stroke-width="1"><rect x="895" y="1053" width="6" height="6" stroke="#111"/><path d="M920 1052l7 4-7 4z"/><circle cx="948" cy="1056.5" r="3.3"/><path d="M791 1052v8M798 1052l-5 4 5 4z"/><path d="M810 1052l5 4-5 4zM817 1052v8"/><path d="M829 1056l6-4v8zM835 1052h2v8h-2"/><path d="M848 1052h2v8h-2M850 1052l6 4-6 4z"/><path d="M868 1058h7a2 2 0 0 0 0-4h-2"/></g>
<rect x="966" y="1050" width="11.5" height="11.7" fill="#3a3a3a"/><circle cx="971.5" cy="1056" r="3" fill="#e5e5e5"/>
<rect x="978.6" y="1050" width="61.4" height="11.7" fill="#171717" stroke="#333"/><text class="e" x="1038" y="1056" font-size="7.3">0:00:03.137</text>
<rect x="1046.4" y="1050" width="10.6" height="11.7" fill="#3f3f3f"/><rect x="1051" y="1053" width="1.3" height="5" fill="#ddd"/><circle cx="1050" cy="1058" r="1.5" fill="#ddd"/>
<rect x="1058" y="1050" width="63" height="11.7" fill="#171717" stroke="#333"/><text class="e" x="1119" y="1056" font-size="7.3">2. 3. 2. 11</text>
<rect x="1127" y="1049.5" width="11.5" height="12.5" fill="#dcdcdc"/><rect x="1130" y="1053" width="5" height="6" fill="#444"/>
<rect x="1139" y="1050" width="38" height="11.7" fill="#1e1e1e"/><text x="1143" y="1056" font-size="7">120.000</text><text class="w" x="1170" y="1056" font-size="6">⬍</text>
<rect x="1179" y="1050" width="23" height="11.7" fill="#444"/><text class="m" x="1190" y="1056" font-size="6.5">Tap</text>
<rect x="1205" y="1050" width="10" height="11.7" fill="#1c1c1c"/><text class="w m" x="1210.5" y="1056" font-size="4.5">▼</text>
<rect x="1223" y="1050" width="21" height="11.7" fill="#3f3f3f"/><rect x="1227" y="1053" width="4" height="6" fill="#ddd"/><rect x="1236" y="1053" width="4" height="6" fill="#ccc"/>
<rect x="1250.5" y="1050" width="71" height="11.7" fill="#171717" stroke="#333"/><text class="e" x="1311" y="1056" font-size="5.5">1.16</text><text class="w" x="1314" y="1055" font-size="4">◀</text>
<rect x="1326" y="1049.5" width="13" height="13" rx="1" fill="#eee"/><rect x="1329.5" y="1053" width="6" height="6" fill="#333"/>
<rect x="1344.6" y="1050" width="11.4" height="11.7" fill="#4a4a4a"/><rect x="1348" y="1053" width="4" height="5" fill="#ccc"/>
<rect x="1356" y="1050" width="62" height="11.7" fill="#171717" stroke="#333"/><text class="e g" x="1416" y="1056" font-size="7.3">0:00:00.000</text>
<rect x="1425" y="1050" width="11.5" height="11.7" fill="#4a4a4a"/><rect x="1429" y="1053" width="4" height="5" fill="#ccc"/>
<rect x="1436.5" y="1050" width="61.5" height="11.7" fill="#171717" stroke="#333"/><text class="e g" x="1496" y="1056" font-size="7.3">0:00:36.000</text>
</svg>
</body></html>
